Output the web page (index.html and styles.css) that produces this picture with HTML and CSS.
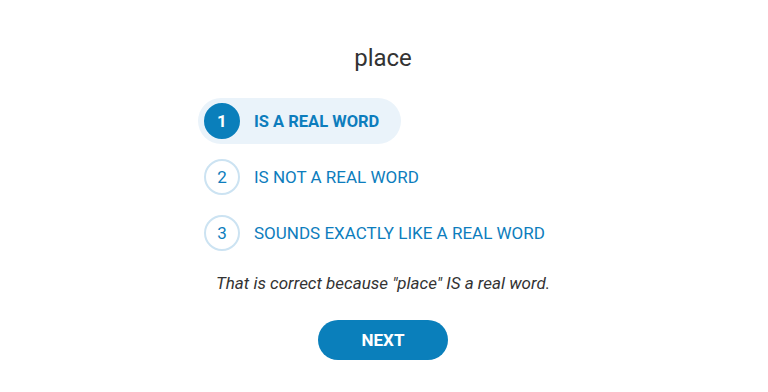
FILE: index.html
```html
<!DOCTYPE html>
<html lang="en">
<head>
    <meta charset="UTF-8">
    <meta name="viewport" content="width=device-width, initial-scale=1.0">
    <title>Real Word</title>
    <link rel="stylesheet" href="styles.css">
</head>
<body>

    <div class="quiz">
        <h1 class="word">place</h1>

        <div class="options">
            <div class="option selected">
                <span class="number">1</span>
                <span class="label">IS A REAL WORD</span>
            </div>
            <div class="option">
                <span class="number">2</span>
                <span class="label">IS NOT A REAL WORD</span>
            </div>
            <div class="option">
                <span class="number">3</span>
                <span class="label">SOUNDS EXACTLY LIKE A REAL WORD</span>
            </div>
        </div>

        <p class="feedback">That is correct because "place" IS a real word.</p>

        <button class="next">NEXT</button>
    </div>

</body>
</html>
```

FILE: styles.css
```css
body {
    margin: 0;
    font-family: Roboto, "Liberation Sans", sans-serif;
    background-color: white;
    color: #333;
}

.quiz {
    display: flex;
    flex-direction: column;
    align-items: center;
    padding: 42px 2px 0 0;
}

.word {
    margin: 0 0 24px;
    font-size: 24px;
    font-weight: 400;
    line-height: 32px;
    color: #333;
}

.options {
    width: 370px;
    display: flex;
    flex-direction: column;
    gap: 10px;
}

.option {
    display: flex;
    align-items: center;
    gap: 14px;
    align-self: flex-start;
    height: 46px;
    padding: 0 22px 0 6px;
    border-radius: 23px;
    color: #0d7dbd;
    font-size: 17px;
}

.option.selected {
    background-color: #eaf3fa;
    font-weight: 700;
    font-size: 16.5px;
}

.number {
    width: 32px;
    height: 32px;
    border: 2px solid #cce3f2;
    border-radius: 50%;
    display: flex;
    align-items: center;
    justify-content: center;
    font-size: 17px;
    font-weight: 400;
}

.selected .number {
    background-color: #0a7fbb;
    border-color: #0a7fbb;
    color: white;
    font-weight: 700;
}

.feedback {
    margin: 17px 0 0;
    font-style: italic;
    font-size: 17px;
    line-height: 20px;
    color: #333;
}

.next {
    margin-top: 27px;
    width: 130px;
    height: 40px;
    border: none;
    border-radius: 20px;
    background-color: #0a7fbb;
    color: white;
    font-family: inherit;
    font-size: 17px;
    font-weight: 700;
    cursor: pointer;
}
```
